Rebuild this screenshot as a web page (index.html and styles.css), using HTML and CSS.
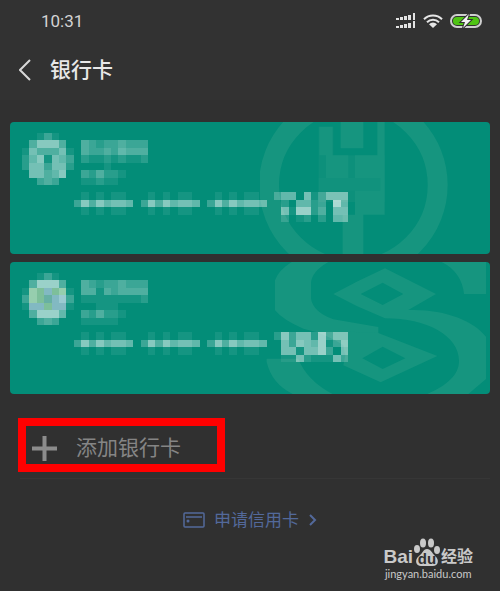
FILE: index.html
```html
<!DOCTYPE html>
<html lang="zh-CN">
<head>
	<meta charset="UTF-8">
	<meta name="viewport" content="width=device-width, initial-scale=1">
	<title>银行卡</title>
	<link rel="stylesheet" href="styles.css">
</head>
<body>
<header class="top">
	<div class="status">
		<span class="time">10:31</span>
		<div class="status-icons">
			<svg class="signal" viewBox="0 0 20 16" aria-hidden="true">
				<path d="M0 5h3v2H0zM4 4h3v3H4zM8 3h3v4H8zM12 2h3v5h-3zM17 0h2v7h-2zM0 13h3v2H0zM4 12h3v3H4zM8 11h3v4H8zM12 10h3v5h-3zM17 8h2v7h-2z" fill="#e2e2e2"/>
			</svg>
			<svg class="wifi" viewBox="0 0 20 16" aria-hidden="true">
				<g fill="none" stroke="#e6e6e6" stroke-width="2">
					<path d="M1 6.200a12.700 12.700 0 0 1 18 0"/>
					<path d="M4 9.200a8.500 8.500 0 0 1 12 0"/>
				</g>
				<path d="M6 11.200a5.600 5.600 0 0 1 8 0L10 15z" fill="#e6e6e6"/>
			</svg>
			<svg class="battery" viewBox="0 0 32 14" aria-hidden="true">
				<rect x="1" y="1" width="30" height="12" rx="6" fill="#303030" stroke="#cfcfcf" stroke-width="2"/>
				<rect x="3" y="3" width="26" height="8" rx="4" fill="#4fc414"/>
				<path d="M19 0l-8 8h4l-2 6 8-8h-4z" fill="#f4f4f4" stroke="#303030" stroke-width="2" paint-order="stroke"/>
			</svg>
		</div>
	</div>
	<div class="nav">
		<button class="back" type="button" aria-label="返回">
			<svg viewBox="0 0 12 22"><path d="M11 1L1 11l10 10" fill="none" stroke="#d8d8d8" stroke-width="2"/></svg>
		</button>
		<h1>银行卡</h1>
	</div>
</header>
<main>
	<section class="card">
		<svg class="emblem" viewBox="0 0 690 396" aria-hidden="true">
			<circle cx="280" cy="189" r="253" fill="none" stroke="#16957f" stroke-width="60"/>
			<path fill="#0d907b" d="M176 14h44v86h154v140H176z"/>
			<path fill="#16957f" d="M178 14h40v86h-40zM198 100h67v68h-67zM242 0h68v79h-68zM352 0h22v278h-89V100h67zM248 278h62v118h-62z"/>
			<path fill="#11927d" d="M176 168h185v38H176z"/>
		</svg>
		<svg class="mosaic" data-card="0" viewBox="0 0 44 12" preserveAspectRatio="none" aria-hidden="true"></svg>
	</section>
	<section class="card">
		<svg class="emblem" viewBox="0 0 690 396" aria-hidden="true">
			<path fill="#16957f" d="M95 0h110Q153 30 153 65V110Q160 150 220 172L355 195V213L285 324Q255 300 250 250Q200 215 130 200Q70 175 45 145V55Q55 25 95 0zM20 290H115Q140 355 218 396H98Q35 365 20 300z"/>
			<path fill="#16957f" fill-rule="evenodd" d="M375 19L528 96 445 144C550 140 640 175 678 224V351L625 396H502C560 370 597 340 597 297C597 220 500 169 375 169L290 132 220 96 290 59zM302 96L368 129 430 96 368 62z"/>
			<path fill="#16957f" d="M545 0h133v96h-66Q605 30 545 0z"/>
			<path fill="#16957f" d="M270 209L355 213 532 282 362 361 250 310z"/>
			<path fill="#038d78" d="M307 289L368 321 436 289 368 254z"/>
		</svg>
		<svg class="mosaic" data-card="1" viewBox="0 0 44 12" preserveAspectRatio="none" aria-hidden="true"></svg>
	</section>
	<div class="add-row">
		<button class="add" type="button">
			<svg viewBox="0 0 25 25"><path d="M0 12.500h25M12.500 0v25" stroke="#8c8c8c" stroke-width="4"/></svg>
			<span>添加银行卡</span>
		</button>
		<div class="mark"></div>
	</div>
	<a class="apply" href="#">
		<svg class="apply-card" viewBox="0 0 22 16"><path d="M2 1h18q1 0 1 1v12q0 1-1 1H2q-1 0-1-1V2q0-1 1-1zM3 5h16" fill="none" stroke="#53699b" stroke-width="1.500"/><circle cx="5" cy="9" r="1.500" fill="#53699b"/></svg>
		<span>申请信用卡</span>
		<svg class="apply-arrow" viewBox="0 0 8 12"><path d="M1 1l5 5-5 5" fill="none" stroke="#53699b" stroke-width="2"/></svg>
	</a>
</main>
<div class="watermark">
	<div class="brand">
		<span class="bai">Bai</span>
		<span class="paw">
			<svg viewBox="0 0 28 30" aria-hidden="true">
				<g fill="#c9c9c9">
					<ellipse cx="4" cy="12" rx="3" ry="4"/>
					<ellipse cx="10" cy="6" rx="3" ry="4.500"/>
					<ellipse cx="18" cy="6" rx="3" ry="4.500"/>
					<ellipse cx="24" cy="13" rx="3" ry="4"/>
					<path d="M14 12c4 0 5 4 8 7 5 4 3 10-2 10H8c-5 0-7-6-2-10 4-3 4-7 8-7z"/>
				</g>
			</svg>
			<b>du</b>
		</span>
		<span class="jingyan">经验</span>
	</div>
	<div class="site">jingyan.baidu.com</div>
</div>
<script src="mosaic.js"></script>
</body>
</html>
```
FILE: styles.css
```css
*{
	margin:0;padding:0;box-sizing: border-box;
}
body{
	min-height: 100vh;position: relative;background: #303030;color: #e8e8e8;
	font-family: Roboto,"Noto Sans CJK SC",sans-serif;
}
svg{display: block;}
button{border:0;background: none;color: inherit;font: inherit;cursor: pointer;}
.top{background: #323232;padding-bottom: 2px;}
.status{
	display: flex;justify-content: space-between;align-items: center;
	height: 42px;padding: 0 18px 0 41px;
}
.time{font-size: 17px;line-height: 42px;color: #d4d4d4;}
.status-icons{display: flex;align-items: center;gap: 7px;}
.signal{width: 20px;height: 16px;}
.wifi{width: 20px;height: 16px;}
.battery{width: 32px;height: 14px;}
.nav{display: flex;align-items: center;height: 56px;padding-left: 19px;gap: 19px;}
.back svg{width: 12px;height: 22px;}
h1{font-size: 21px;line-height: 32px;font-weight: 500;}
main{padding: 22px 10px 0;}
.card{
	position: relative;height: 132px;margin-bottom: 8px;padding: 11px 12px;
	border-radius: 4px;background: #038d78;overflow: hidden;
}
.emblem{position: absolute;top: 0;right: 0;width: 230px;height: 132px;}
.mosaic{position: relative;width: 326px;height: 89px;}
.add-row{position: relative;margin-left: 10px;padding: 28px 0 12px 12px;border-bottom: 1px solid #363636;}
.add{display: flex;align-items: center;gap: 19px;font-size: 21px;line-height: 36px;color: #858585;}
.add svg{width: 25px;height: 25px;}
.mark{position: absolute;left: -2px;top: 16px;width: 207px;height: 54px;border: 8px solid #f00;}
.apply{
	display: flex;align-items: center;justify-content: center;margin-top: 28px;
	font-size: 17px;line-height: 26px;color: #53699b;text-decoration: none;
}
.apply-card{width: 22px;height: 16px;margin-right: 9px;}
.apply-arrow{width: 8px;height: 12px;margin-left: 10px;}
.watermark{position: absolute;right: 27px;bottom: 10px;color: #c9c9c9;}
.brand{display: flex;align-items: flex-end;height: 30px;}
.bai{font: bold 19px/20px "Liberation Sans",sans-serif;}
.paw{position: relative;}
.paw svg{width: 28px;height: 30px;}
.paw b{
	position: absolute;left: 0;bottom: 1px;width: 28px;text-align: center;
	font: bold 15px/15px "Liberation Sans",sans-serif;color: #303030;
}
.jingyan{font-size: 16px;line-height: 20px;font-weight: 700;}
.site{font: 11px/14px Lato,sans-serif;text-align: center;}
```
FILE: mosaic.js
```js
// each digit is how white a cell is, letters are tinted cells
var heads = [
	[
		'00131',
		'04777400432334333',
		'16444610433435444',
		'25716530211212112',
		'26636620000100000',
		'0664570032422100',
		'0034300011211000',
		''
	],
	[
		'00131',
		'04888400432334333',
		'1gGbGg10441434444',
		'3gGtbB30111111112',
		'1bbGbb10001110000',
		'0488850032422100',
		'0034300011111000',
		''
	]
];
// last four digits of the card number
var numbers = [
	['3550613666', '0205523095', '0618824066', '0201202055'],
	['2736628366', '0637658137', '0661668306', '0116211163']
];
var tints = {g: '#96ceae', G: '#7dbf9a', b: '#82b9c2', B: '#9bcad1', t: '#67b0a4'};

function dashes(cells){
	return '0000000' + (cells + '0').repeat(3);
}

function draw(svg, rows){
	for(var y = 0; y<rows.length; y++){
		for(var x = 0; x<rows[y].length; x++){
			var c = rows[y][x];
			if(c == '0') continue;
			var r = document.createElementNS('http://www.w3.org/2000/svg', 'rect');
			r.setAttribute('x', x);
			r.setAttribute('y', y);
			r.setAttribute('width', 1);
			r.setAttribute('height', 1);
			r.setAttribute('shape-rendering', 'crispEdges');
			r.setAttribute('fill', tints[c] || '#fff');
			if(!tints[c]) r.setAttribute('fill-opacity', c * 0.075);
			svg.appendChild(r);
		}
	}
}

for(var i = 0; i<heads.length; i++){
	var rows = heads[i].concat([
		dashes('01010110') + numbers[i][0],
		dashes('37475665') + numbers[i][1],
		dashes('01010110') + numbers[i][2],
		'0'.repeat(34) + numbers[i][3]
	]);
	draw(document.querySelector('[data-card="' + i + '"]'), rows);
}
```
